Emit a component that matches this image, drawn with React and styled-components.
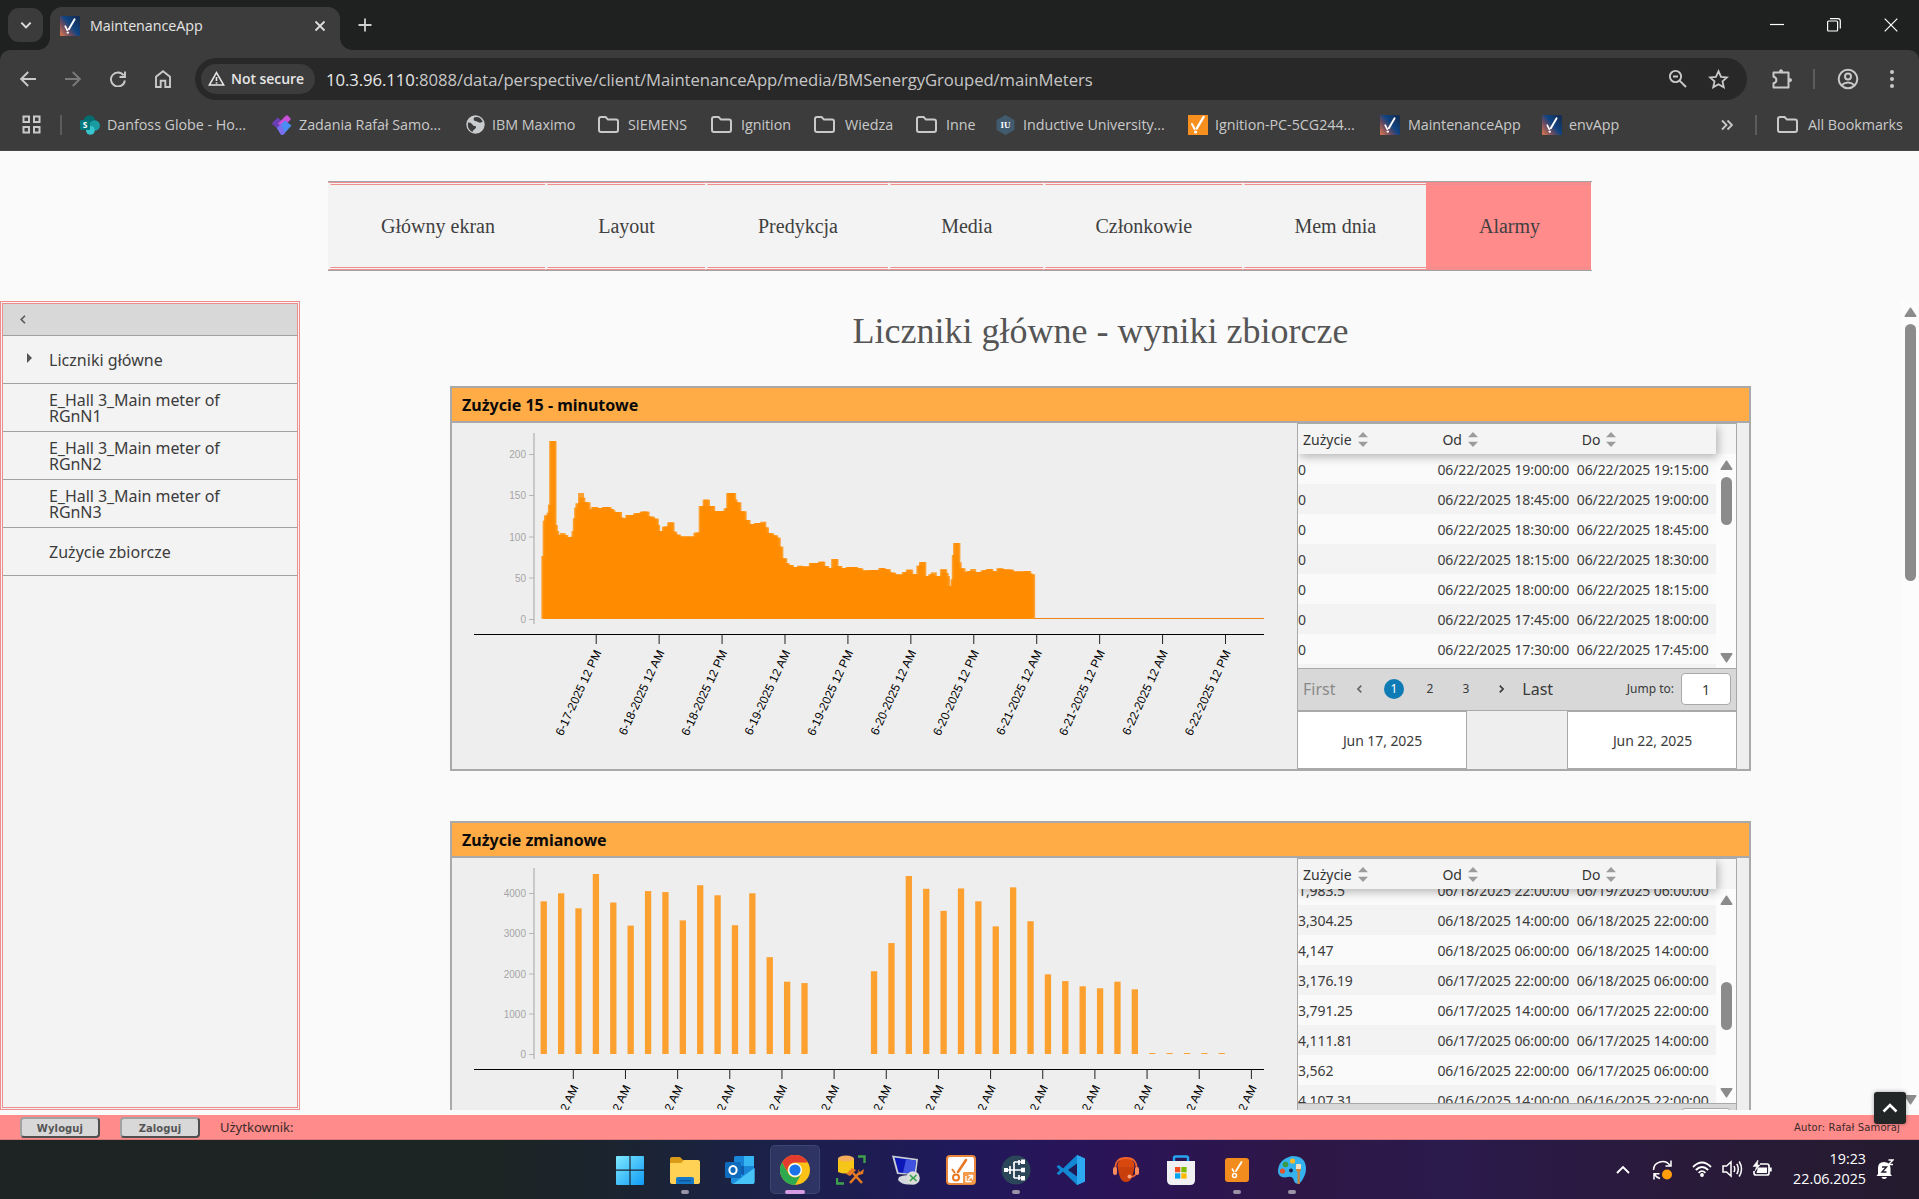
import React from "react";
import styled, { createGlobalStyle } from "styled-components";

const GlobalStyle = createGlobalStyle`
  * { box-sizing: border-box; }
  html, body { margin: 0; padding: 0; overflow: hidden; background: #fafafa; }
  body { font-family: "Noto Sans", "Open Sans", sans-serif; }
  svg { display: block; flex: none; }
`;

const uiFont = `"Open Sans", "Noto Sans", sans-serif`;
const serif = `"Liberation Serif", "Times New Roman", serif`;

const Screen = styled.div`
  width: 1919px;
  height: 1199px;
  display: flex;
  flex-direction: column;
  overflow: hidden;
`;

/* ---------- browser chrome ---------- */

const TabStrip = styled.div`
  height: 50px;
  flex: none;
  display: flex;
  background: #1f2120;
  font-family: ${uiFont};
  padding-left: 8px;
`;

const TabSearch = styled.div`
  width: 35px;
  height: 34px;
  margin-top: 8px;
  border-radius: 11px;
  background: #3b3b3b;
  display: grid;
  place-items: center;
`;

const Tab = styled.div`
  position: relative;
  width: 290px;
  height: 43px;
  margin: 7px 0 0 7px;
  padding: 0 14px 0 10px;
  border-radius: 12px 12px 0 0;
  background: #3c3c3c;
  display: flex;
  align-items: center;
  padding-bottom: 6px;
  &::before, &::after {
    content: "";
    position: absolute;
    bottom: 0;
    width: 12px;
    height: 12px;
  }
  &::before {
    left: -12px;
    background: radial-gradient(circle at 0 0, transparent 11.5px, #3c3c3c 12px);
  }
  &::after {
    right: -12px;
    background: radial-gradient(circle at 100% 0, transparent 11.5px, #3c3c3c 12px);
  }
`;

const TabTitle = styled.span`
  flex: 1;
  margin-left: 10px;
  font-size: 14.3px;
  letter-spacing: -0.03px;
  color: #e4e4e4;
`;

const NewTab = styled.div`
  margin: 18px 0 0 18px;
`;

const WindowControls = styled.div`
  margin-left: auto;
  display: flex;
  align-items: center;
  gap: 43px;
  height: 49px;
  padding-right: 21px;
`;

const Toolbar = styled.div`
  height: 58px;
  flex: none;
  display: flex;
  align-items: center;
  background: #3c3c3c;
  font-family: ${uiFont};
  padding-left: 5px;
  border-radius: 10px 10px 0 0;
`;

const ToolbarBack = styled.div`
  background: #1f2120;
  flex: none;
`;

const ToolButton = styled.div`
  width: ${(p) => p.$w || 45}px;
  margin-left: ${(p) => p.$ml || 0}px;
  display: flex;
  justify-content: center;
  color: ${(p) => (p.$dim ? "#7a7a7a" : "#c9c9c9")};
`;

const Omnibox = styled.div`
  width: 1552px;
  height: 42px;
  margin-left: 10px;
  border-radius: 21px;
  background: #282828;
  display: flex;
  align-items: center;
  padding: 0 18px 0 6px;
  color: #c9c9c9;
`;

const SecurityChip = styled.div`
  width: 114px;
  height: 30px;
  border-radius: 15px;
  background: #3c3c3c;
  display: flex;
  align-items: center;
  gap: 6px;
  padding: 0 0 1px 7px;
  font-size: 14px;
  font-weight: 600;
  letter-spacing: -0.05px;
  color: #e6e6e6;
  white-space: nowrap;
`;

const Url = styled.div`
  flex: 1;
  margin-left: 11px;
  font-size: 16.7px;
  letter-spacing: -0.07px;
  color: #c6c6c6;
  white-space: nowrap;
  b { font-weight: 400; color: #e8e8e8; }
`;

const OmniActions = styled.div`
  display: flex;
  align-items: center;
  gap: 20px;
`;

const Separator = styled.div`
  width: 2px;
  height: 20px;
  flex: none;
  margin: 0 ${(p) => p.$mr}px 0 ${(p) => p.$ml}px;
  background: #5c5c5c;
`;

const Bookmarks = styled.div`
  height: 43px;
  flex: none;
  display: flex;
  align-items: center;
  background: #3c3c3c;
  border-bottom: 1px solid #4a4545;
  font-family: ${uiFont};
  padding: 0 0 9px 22px;
`;

const Bookmark = styled.div`
  display: flex;
  align-items: center;
  width: ${(p) => p.$w}px;
  gap: ${(p) => p.$gap || 7}px;
  font-size: 14.3px;
  letter-spacing: -0.03px;
  color: #c9c9c9;
  white-space: nowrap;
`;

const BookmarkEnd = styled.div`
  margin-left: auto;
  display: flex;
  align-items: center;
  color: #c9c9c9;
`;

/* ---------- page ---------- */

const NavArea = styled.div`
  height: 150px;
  flex: none;
  background: #fafafa;
  padding: 30px 0 0 328px;
`;

const Nav = styled.nav`
  width: 1264px;
  height: 90px;
  display: flex;
  border-top: 1px solid #a3a3a3;
  border-bottom: 1px solid #a3a3a3;
`;

const NavItem = styled.div`
  width: ${(p) => p.$w}px;
  display: flex;
  align-items: center;
  justify-content: center;
  border: 3px double transparent;
  border-right: none;
  border-top-color: #ee8d8d;
  border-bottom-color: #ee8d8d;
  background: ${(p) => (p.$active ? "#ff8b8b" : "#f3f3f3")};
  padding-top: 1px;
  font-family: ${serif};
  font-size: 20px;
  color: #404040;
`;

const Main = styled.div`
  height: 809px;
  flex: none;
  display: flex;
  background: #fafafa;
  overflow: hidden;
`;

const Sidebar = styled.aside`
  width: 300px;
  height: 809px;
  border: 3px double #ee8d8d;
  background: #f3f3f3;
`;

const SideHeader = styled.div`
  height: 32px;
  background: #d8d8d8;
  border-bottom: 1px solid #a0a0a0;
  display: flex;
  align-items: center;
  padding-left: 17px;
`;

const SideItem = styled.div`
  height: 48px;
  border-bottom: 1px solid #a0a0a0;
  display: flex;
  align-items: center;
  font-size: 16px;
  line-height: 16px;
  color: #3c3c3c;
`;

const Caret = styled.div`
  width: 46px;
  padding: 0 0 4px 24px;
`;

const SideText = styled.div`
  width: 190px;
  letter-spacing: ${(p) => (p.$long ? -0.05 : 0.03)}px;
`;

const Content = styled.main`
  width: 1601px;
  display: flex;
  flex-direction: column;
  align-items: center;
  overflow: hidden;
`;

const PageTitle = styled.h1`
  margin: 0;
  height: 85px;
  flex: none;
  font: 400 36px/61px ${serif};
  color: #555;
`;

const Card = styled.section`
  width: 1301px;
  height: 385px;
  flex: none;
  margin-bottom: 50px;
  border: 2px solid #a9a9a9;
  background: #eee;
`;

const CardHeader = styled.div`
  height: 35px;
  border-bottom: 2px solid #a9a9a9;
  background: #ffac47;
  padding: 1px 0 0 10px;
  font-size: 16px;
  line-height: 33px;
  font-weight: 700;
  color: #0a0a0a;
`;

const CardBody = styled.div`
  height: 346px;
  display: flex;
`;

const TableColumn = styled.div`
  width: 440px;
  height: 346px;
  display: flex;
  flex-direction: column;
`;

const Table = styled.div`
  height: 245px;
  flex: none;
  border: 1px solid #a9a9a9;
  border-bottom: none;
  background: #fafafa;
  display: flex;
  flex-direction: column;
`;

const TableHead = styled.div`
  position: relative;
  z-index: 1;
  height: 30px;
  flex: none;
  background: #f5f5f5;
`;

const HeadCells = styled.div`
  width: 418px;
  height: 30px;
  display: grid;
  grid-template-columns: repeat(3, 139.4px);
  background: #f4f4f4;
  box-shadow: 2px 3px 10px rgba(0, 0, 0, 0.28);
  clip-path: inset(0 -20px -20px 0);
`;

const HeadCell = styled.div`
  display: flex;
  align-items: center;
  gap: 6px;
  padding-left: 5px;
  font-size: 14px;
  color: #333;
`;

const TableBody = styled.div`
  height: 214px;
  flex: none;
  display: flex;
  overflow: hidden;
`;

const Rows = styled.div`
  width: 418px;
  flex: none;
  margin-top: ${(p) => p.$shift}px;
`;

const Row = styled.div`
  height: 30px;
  display: grid;
  grid-template-columns: repeat(3, 139.4px);
  align-items: center;
  background: ${(p) => (p.$alt ? "#f3f3f3" : "#fafafa")};
  font-size: 14px;
  line-height: 30px;
  letter-spacing: -0.1px;
  color: #3c3c3c;
  white-space: nowrap;
  span { padding-top: 1px; }
`;

const ScrollTrack = styled.div`
  width: ${(p) => p.$w}px;
  flex: 1;
  display: flex;
  flex-direction: column;
  align-items: center;
  background: ${(p) => p.$bg};
`;

const Thumb = styled.div`
  width: ${(p) => p.$w}px;
  height: ${(p) => p.$h}px;
  margin: ${(p) => p.$mt}px 0 auto;
  border-radius: 6px;
  background: #8b8b8b;
  flex: none;
`;

const Arrow = styled.div`
  margin: ${(p) => (p.$down ? "0 0 5px" : "6px 0 0")};
  transform: ${(p) => (p.$down ? "rotate(180deg)" : "none")};
`;

const Pager = styled.div`
  height: 43px;
  flex: none;
  border: 1px solid #a9a9a9;
  background: #d8d8d8;
  display: flex;
  align-items: center;
  padding: 0 5px 2px 5px;
  font-size: 16px;
  color: #3a3a3a;
  white-space: nowrap;
`;

const PagerCell = styled.div`
  width: ${(p) => p.$w}px;
  display: flex;
  justify-content: ${(p) => (p.$start ? "flex-start" : "center")};
  color: ${(p) => (p.$dim ? "#8a8a8a" : "#3a3a3a")};
  font-size: ${(p) => (p.$start ? 16 : 12)}px;
`;

const CurrentPage = styled.div`
  width: 20px;
  height: 20px;
  border-radius: 50%;
  background: #0f7bb5;
  color: #fff;
  font-size: 12px;
  line-height: 20px;
  text-align: center;
`;

const JumpLabel = styled.span`
  margin-left: auto;
  font-size: 12px;
`;

const JumpInput = styled.div`
  width: 50px;
  height: 32px;
  margin-left: 7px;
  border: 1px solid #a9a9a9;
  border-radius: 4px;
  background: #fff;
  font-size: 14px;
  line-height: 31px;
  text-align: center;
`;

const DateRow = styled.div`
  height: 58px;
  display: flex;
  justify-content: space-between;
`;

const DateInput = styled.div`
  width: 170px;
  height: 58px;
  border: 1px solid #a9a9a9;
  background: #fff;
  display: grid;
  place-items: center;
  font-size: 14px;
  letter-spacing: -0.08px;
  color: #3c3c3c;
  padding: 1px 0 0 1px;
`;

const Footer = styled.footer`
  position: relative;
  height: 25px;
  flex: none;
  margin-top: 5px;
  background: #ff8b8b;
  display: flex;
  align-items: center;
  padding: 0 19px 0 20px;
  border-bottom: 1px solid #d97b7b;
`;

const FooterButton = styled.div`
  width: 80px;
  height: 21px;
  margin-right: 20px;
  border: 2px solid;
  border-color: #a2a2a2 #4f4f4f #4f4f4f #a2a2a2;
  border-radius: 4px;
  background: #d8d8d8;
  font: 700 10px/19px "DejaVu Sans", Verdana, sans-serif;
  letter-spacing: 0.1px;
  text-align: center;
  color: #555;
`;

const UserLabel = styled.span`
  font-size: 13px;
  color: #3c2a2a;
`;

const Author = styled.span`
  margin-left: auto;
  padding-top: 2px;
  font: 400 10px/20px "DejaVu Sans", Verdana, sans-serif;
  letter-spacing: 0.12px;
  color: #3c2a2a;
`;

const ScrollTop = styled.div`
  position: absolute;
  right: 13px;
  top: -23px;
  width: 32px;
  height: 32px;
  border-radius: 3px;
  background: #222627;
  box-shadow: 0 0 4px rgba(0, 0, 0, 0.35);
  display: grid;
  place-items: center;
`;

/* ---------- taskbar ---------- */

const Taskbar = styled.div`
  position: relative;
  height: 59px;
  flex: none;
  display: flex;
  align-items: flex-start;
  padding-top: 5px;
  background: linear-gradient(90deg, #1e2423 0, #1c2424 500px, #1b2430 620px, #1b2148 760px, #20195a 950px, #2a1458 1100px, #2e1747 1300px, #2b1a4c 1450px, #2a1a3c 1650px, #241b2e 100%);
  padding-left: 605px;
`;

const TaskApp = styled.div`
  width: 50px;
  height: 49px;
  margin-right: 5.15px;
  flex: none;
  border-radius: 5px;
  background: ${(p) => (p.$active ? "rgba(120,140,190,0.2)" : "transparent")};
  box-shadow: ${(p) => (p.$active ? "inset 0 0 0 1px rgba(150,160,200,0.15)" : "none")};
  display: flex;
  flex-direction: column;
  align-items: center;
  padding-top: 10px;
  gap: 5px;
`;

const RunMark = styled.div`
  width: ${(p) => (p.$active ? 20 : 8)}px;
  height: 4px;
  border-radius: 2px;
  background: ${(p) => (p.$active ? "#d79be3" : "#9a93a6")};
`;

const Tray = styled.div`
  margin: 4px 0 0 auto;
  width: 303px;
  display: flex;
  align-items: center;
  height: 40px;
`;

const TrayIcon = styled.div`
  width: ${(p) => p.$w}px;
  flex: none;
`;

const Clock = styled.div`
  width: 78px;
  margin-left: 16px;
  margin-right: 10px;
  font: 400 14.3px/20px ${uiFont};
  color: #fff;
  text-align: right;
`;

/* ---------- icons ---------- */

const Stroke = ({ w = 20, h, d, sw = 2, box = "0 0 24 24", children, ...rest }) => (
  <svg width={w} height={h || w} viewBox={box} fill="none" stroke="currentColor" strokeWidth={sw} {...rest}>
    {d && <path d={d} />}
    {children}
  </svg>
);

const ScrollArrow = ({ down }) => (
  <Arrow $down={down}>
    <svg width="13" height="10" viewBox="0 0 13 10">
      <path d="M6.500 1.200L11.800 9.200H1.200Z" fill="#8b8b8b" stroke="#8b8b8b" strokeWidth="1.400" strokeLinejoin="round" />
    </svg>
  </Arrow>
);

const AppIcon = ({ size = 20 }) => (
  <svg width={size} height={size} viewBox="0 0 20 20">
    <defs>
      <linearGradient id="appbg" x1="0" y1="1" x2="1" y2="0.2">
        <stop offset="0" stopColor="#e07a50" />
        <stop offset="0.35" stopColor="#6b4b60" />
        <stop offset="0.6" stopColor="#0f4482" />
        <stop offset="1" stopColor="#152d52" />
      </linearGradient>
    </defs>
    <rect width="20" height="20" rx="1" fill="url(#appbg)" />
    <path d="M5.2 10.2l2 4" stroke="#fff" strokeWidth="1.700" strokeLinecap="round" />
    <path d="M14.6 3.2L8.8 13.2" stroke="#fff" strokeWidth="1.900" strokeLinecap="round" />
    <circle cx="7.8" cy="16.6" r="1.2" fill="#fff" />
  </svg>
);

const IgnitionIcon = () => (
  <svg width="20" height="20" viewBox="0 0 20 20">
    <rect width="20" height="20" fill="#f7901e" />
    <path d="M4 9l2.6 5" stroke="#fff" strokeWidth="2" strokeLinecap="round" />
    <path d="M15.6 2L8.8 13.4" stroke="#fff" strokeWidth="2.4" strokeLinecap="round" />
    <circle cx="7.6" cy="17" r="1.6" fill="#fff" />
  </svg>
);

const FolderIcon = () => (
  <svg width="21" height="17" viewBox="0 0 21 17" fill="none" stroke="#c9c9c9" strokeWidth="2">
    <path d="M1 3Q1 1 3 1H7.6L10 3.6H18Q20 3.6 20 5.6V14Q20 16 18 16H3Q1 16 1 14Z" />
  </svg>
);

const SharePointIcon = () => (
  <svg width="20" height="20" viewBox="0 0 20 20">
    <circle cx="9.5" cy="6" r="5.8" fill="#036c70" />
    <circle cx="14.6" cy="10.5" r="5.3" fill="#1a9ba1" />
    <circle cx="10.4" cy="15.4" r="4.4" fill="#37c6d0" />
    <rect y="5" width="10" height="10" rx="1" fill="#03787c" />
    <text x="5" y="13" fontSize="8.5" fontWeight="700" fill="#fff" textAnchor="middle" fontFamily="Open Sans, sans-serif">S</text>
  </svg>
);

const PowerIcon = () => (
  <svg width="20" height="20" viewBox="0 0 20 20">
    <path d="M1 7L6 2.5 12 9 6 14 0 9Z" fill="#6a3fb5" />
    <path d="M8.5 6L14 0.5Q15 -0.2 16 0.8L19 4 11 13 6 8.5Z" fill="#c94fd8" />
    <path d="M5 13L13 5.5 19.5 10.5 11.5 19.5Q10 20.5 8.6 19Z" fill="#4b8df2" />
    <path d="M5 13L9 9.3 13 18 11.5 19.5Q10 20.5 8.6 19Z" fill="#7b6cf0" />
  </svg>
);

const GlobeIcon = () => (
  <svg width="19" height="19" viewBox="0 0 19 19">
    <circle cx="9.5" cy="9.5" r="9.2" fill="#c9cccf" />
    <path d="M2 7.5Q5 7 6.2 9.2T9.6 11Q10.8 13 8.6 14.2T6.6 17Q2.6 15.2 1.8 11Z" fill="#3c3c3c" />
    <path d="M8.6 2.2Q12 1.6 14.6 3.4L16.8 6.6Q14.6 8.4 12.4 7.2T9 6Q6.4 4.4 8.6 2.2Z" fill="#3c3c3c" />
  </svg>
);

const IUIcon = () => (
  <svg width="19" height="20" viewBox="0 0 19 20">
    <path d="M9.5 0L18.5 5V15L9.5 20 0.5 15V5Z" fill="#415a6e" />
    <text x="9.5" y="13.4" fontSize="9" fontWeight="700" fill="#fff" textAnchor="middle" fontFamily="Liberation Serif, serif">IU</text>
  </svg>
);

const SortIcon = () => (
  <svg width="10" height="15" viewBox="0 0 10 15" fill="#9c9c9c">
    <path d="M5 0L10 5.2H0ZM5 15L10 9.8H0Z" />
  </svg>
);

/* ---------- data ---------- */

const navItems = [
  ["Główny ekran", 217], ["Layout", 160], ["Predykcja", 183], ["Media", 154.5],
  ["Członkowie", 199.5], ["Mem dnia", 183.500], ["Alarmy", 165, true],
];

const bookmarks = [
  [<SharePointIcon />, "Danfoss Globe - Ho...", 192],
  [<PowerIcon />, "Zadania Rafał Samo...", 194],
  [<GlobeIcon />, "IBM Maximo", 132],
  [<FolderIcon />, "SIEMENS", 113, 9],
  [<FolderIcon />, "Ignition", 103, 9],
  [<FolderIcon />, "Wiedza", 102, 10],
  [<FolderIcon />, "Inne", 80, 9],
  [<IUIcon />, "Inductive University...", 192, 8],
  [<IgnitionIcon />, "Ignition-PC-5CG244...", 192],
  [<AppIcon />, "MaintenanceApp", 162, 8],
  [<AppIcon />, "envApp", 110, 7],
];

const rows15 = [
  ["0", "06/22/2025 19:00:00", "06/22/2025 19:15:00"],
  ["0", "06/22/2025 18:45:00", "06/22/2025 19:00:00"],
  ["0", "06/22/2025 18:30:00", "06/22/2025 18:45:00"],
  ["0", "06/22/2025 18:15:00", "06/22/2025 18:30:00"],
  ["0", "06/22/2025 18:00:00", "06/22/2025 18:15:00"],
  ["0", "06/22/2025 17:45:00", "06/22/2025 18:00:00"],
  ["0", "06/22/2025 17:30:00", "06/22/2025 17:45:00"],
];

const rowsShift = [
  ["1,983.5", "06/18/2025 22:00:00", "06/19/2025 06:00:00"],
  ["3,304.25", "06/18/2025 14:00:00", "06/18/2025 22:00:00"],
  ["4,147", "06/18/2025 06:00:00", "06/18/2025 14:00:00"],
  ["3,176.19", "06/17/2025 22:00:00", "06/18/2025 06:00:00"],
  ["3,791.25", "06/17/2025 14:00:00", "06/17/2025 22:00:00"],
  ["4,111.81", "06/17/2025 06:00:00", "06/17/2025 14:00:00"],
  ["3,562", "06/16/2025 22:00:00", "06/17/2025 06:00:00"],
  ["4,107.31", "06/16/2025 14:00:00", "06/16/2025 22:00:00"],
];

// Load profile as [position, level] steps; a level holds until the next position.
const profile = [
  [304, 558], [308, 452], [314, 436], [320, 428], [324, 404], [328, 256], [330, 213], [348, 465], [352, 483],
  [356, 495], [360, 489], [376, 495], [383, 502], [390, 500], [394, 483], [397, 445], [402, 413], [407, 400],
  [413, 369], [432, 383], [434, 397], [451, 418], [454, 411], [475, 415], [485, 411], [513, 417], [522, 421],
  [527, 426], [546, 443], [553, 446], [556, 435], [578, 430], [600, 425], [627, 440], [643, 446], [655, 465],
  [660, 483], [666, 470], [684, 457], [704, 485], [712, 494], [722, 500], [759, 488], [776, 408], [790, 389],
  [809, 408], [825, 423], [850, 415], [858, 369], [887, 388], [890, 397], [903, 424], [919, 450], [933, 462],
  [943, 459], [960, 455], [978, 472], [985, 490], [1004, 496], [1012, 503], [1022, 530], [1028, 545],
  [1031, 565], [1040, 580], [1048, 585], [1063, 591], [1070, 587], [1090, 590], [1109, 579], [1135, 575],
  [1155, 588], [1166, 595], [1173, 567], [1194, 588], [1205, 595], [1219, 591], [1252, 595],
  [1269, 602], [1285, 600], [1316, 594], [1335, 598], [1351, 608], [1368, 614], [1387, 606], [1400, 599],
  [1419, 613], [1430, 587], [1439, 576], [1458, 618], [1467, 613], [1471, 607], [1489, 619], [1500, 615],
  [1502, 598], [1521, 609], [1524, 618], [1528, 648], [1531, 628], [1534, 598], [1537, 555], [1541, 519],
  [1560, 577], [1563, 595], [1576, 607], [1579, 603], [1589, 597], [1608, 606], [1624, 601], [1638, 597],
  [1658, 603], [1670, 607], [1671, 595], [1690, 598], [1700, 599], [1722, 605], [1753, 603], [1772, 610],
  [1776, 613], [1784, 748],
];

const levelAt = (x) => {
  let y = 748;
  for (const [px, py] of profile) {
    if (px > x) break;
    y = py;
  }
  return y;
};

const quarterBars = [];
for (let x = 313; x <= 1777; x += 3.934) {
  let y = 0;
  for (let k = -6.5; k <= 6.5; k += 1) y = Math.max(y, levelAt(x + k));
  quarterBars.push({ x: x / 3 - 12 - 3, y: y / 3 - 53 });
}

const quarterTicks = ["6-17-2025 12 PM", "6-18-2025 12 AM", "6-18-2025 12 PM", "6-19-2025 12 AM", "6-19-2025 12 PM",
  "6-20-2025 12 AM", "6-20-2025 12 PM", "6-21-2025 12 AM", "6-21-2025 12 PM", "6-22-2025 12 AM", "6-22-2025 12 PM"];

// Consumption per shift; null means no reading.
const shiftValues = [3800, 4000, 3625, 4480, 3770, 3195, 4055, 4030, 3325, 4200, 3950, 3205, 4000, 2410, 1800, 1765,
  null, null, null, 2060, 2760, 4430, 4112, 3562, 4120, 3800, 3176, 4147, 3304, 1983, 1815, 1685, 1635, 1800, 1610,
  24, 24, 24, 24, 24];

const axisFont = { fontFamily: "Liberation Sans, Arial, sans-serif" };

const ValueAxis = ({ ticks }) => (
  <g>
    <rect x="81" y="10" width="2" height="191" fill="#c9c9c9" />
    {ticks.map(([label, y]) => (
      <g key={label}>
        <rect x="77" y={y - 0.5} width="5" height="1" fill="#b5b5b5" />
        <text x="74" y={y + 3.6} fontSize="10" textAnchor="end" fill="#a5a5a5" {...axisFont}>{label}</text>
      </g>
    ))}
  </g>
);

const TimeAxis = ({ labels, start, step }) => (
  <g>
    <rect x="22" y="211" width="790" height="1" fill="#000" />
    {labels.map((label, i) => {
      const x = start + i * step;
      return (
        <g key={i}>
          <rect x={x - 0.5} y="212" width="1" height="9" fill="#222" />
          <text transform={`translate(${x + 5.5} 229.5) rotate(-65)`} fontSize="12" textAnchor="end" fill="#000" {...axisFont}>{label}</text>
        </g>
      );
    })}
  </g>
);

const QuarterChart = () => (
  <svg width="845" height="346" viewBox="0 0 845 346">
    {quarterBars.map((b, i) => (
      <rect key={i} x={b.x} y={b.y} width="6" height={195.8 - b.y} fill="#ff8c00" opacity="0.8" />
    ))}
    <rect x="582" y="195" width="230" height="1" fill="#f0821a" />
    <ValueAxis ticks={[["200", 31.5], ["150", 72.5], ["100", 114], ["50", 155], ["0", 196.5]]} />
    <TimeAxis labels={quarterTicks} start={144.2} step={62.93} />
  </svg>
);

const ShiftChart = () => (
  <svg width="845" height="346" viewBox="0 0 845 346">
    {shiftValues.map((v, i) => v && (
      <rect key={i} x={88.6 + i * 17.385} y={196 - v * 0.04018} width="6.3" height={v * 0.04018} fill="#ff8c00" opacity="0.8" />
    ))}
    <ValueAxis ticks={[["4000", 35.5], ["3000", 75.5], ["2000", 116], ["1000", 156], ["0", 196.5]]} />
    <TimeAxis labels={Array(14).fill("12 AM")} start={121.3} step={52.16} />
  </svg>
);

const MeterCard = ({ title, chart, rows, shift, thumb }) => (
  <Card>
    <CardHeader>{title}</CardHeader>
    <CardBody>
      {chart}
      <TableColumn>
        <Table>
          <TableHead>
            <HeadCells>
              {["Zużycie", "Od", "Do"].map((h) => <HeadCell key={h}>{h}<SortIcon /></HeadCell>)}
            </HeadCells>
          </TableHead>
          <TableBody>
            <Rows $shift={shift}>
              {rows.map((r, i) => (
                <Row key={i} $alt={i % 2 === 1}>{r.map((c, j) => <span key={j}>{c}</span>)}</Row>
              ))}
              {shift === 0 && <Row $alt />}
            </Rows>
            <ScrollTrack $w={20} $bg="#fcfcfc">
              <ScrollArrow />
              <Thumb $w={11} $h={48} $mt={thumb} />
              <ScrollArrow down />
            </ScrollTrack>
          </TableBody>
        </Table>
        <Pager>
          <PagerCell $w={44} $start $dim>First</PagerCell>
          <PagerCell $w={26}><Stroke w={10} d="M15 4l-8 8 8 8" sw={4} color="#666" /></PagerCell>
          <PagerCell $w={42}><CurrentPage>1</CurrentPage></PagerCell>
          <PagerCell $w={30}>2</PagerCell>
          <PagerCell $w={42}>3</PagerCell>
          <PagerCell $w={27}><Stroke w={10} d="M9 4l8 8-8 8" sw={4} /></PagerCell>
          <PagerCell $w={50} $start>&nbsp;&nbsp;Last</PagerCell>
          <JumpLabel>Jump to:</JumpLabel>
          <JumpInput>1</JumpInput>
        </Pager>
        <DateRow>
          <DateInput>Jun 17, 2025</DateInput>
          <DateInput>Jun 22, 2025</DateInput>
        </DateRow>
      </TableColumn>
    </CardBody>
  </Card>
);

/* ---------- taskbar icons (30 x 30) ---------- */

const Pic = ({ children }) => <svg width="30" height="30" viewBox="0 0 30 30">{children}</svg>;

const taskApps = [
  {
    icon: (
      <Pic>
        <defs><linearGradient id="win" x1="0" y1="0" x2="1" y2="1"><stop offset="0" stopColor="#7fe9ff" /><stop offset="1" stopColor="#0f9bf5" /></linearGradient></defs>
        <path d="M1 2Q1 1 2 1H14.4V14.6H1ZM15.6 1H28Q29 1 29 2V14.6H15.6ZM1 15.8H14.4V30H2Q1 30 1 29ZM15.6 15.8H29V29Q29 30 28 30H15.6Z" fill="url(#win)" />
      </Pic>
    ),
  },
  {
    run: true,
    icon: (
      <Pic>
        <path d="M0 4Q0 2 2 2H10L13 5H20V12H0Z" fill="#d99a17" />
        <path d="M0 8H11L14 5H28Q30 5 30 7V27Q30 29 28 29H2Q0 29 0 27Z" fill="#ffd255" />
        <path d="M6 29V24Q6 22 8 22H22Q24 22 24 24V29Z" fill="#1478c8" />
        <rect x="9" y="25" width="12" height="1.6" rx=".8" fill="#0c559a" />
      </Pic>
    ),
  },
  {
    icon: (
      <Pic>
        <rect x="9" y="1" width="20" height="20" rx="1.5" fill="#1a86d8" />
        <path d="M19 1H29V11H19Z" fill="#35b5f2" /><path d="M9 11H19V21H9Z" fill="#0f5fb0" />
        <path d="M6 13L18 20 29.5 13V27Q29.5 29 27.5 29H8Q6 29 6 27Z" fill="#1e8fe0" />
        <path d="M29.5 13L8 29H27.5Q29.5 29 29.5 27Z" fill="#47c3f7" />
        <rect x="0" y="7" width="16" height="16" rx="1.6" fill="#0f6cbd" />
        <ellipse cx="8" cy="15" rx="3.6" ry="4" fill="none" stroke="#fff" strokeWidth="2" />
      </Pic>
    ),
  },
  {
    run: true,
    active: true,
    icon: (
      <Pic>
        <circle cx="15" cy="15" r="15" fill="#fbc116" />
        <path d="M2 7.5A15 15 0 0 1 28 7.5H15A7.5 7.5 0 0 0 8.5 18.75Z" fill="#e33b2e" />
        <path d="M2 7.5A15 15 0 0 0 15 30L21.5 18.75A7.5 7.5 0 0 1 8.5 18.75Z" fill="#2da94f" />
        <circle cx="15" cy="15" r="7" fill="#fff" /><circle cx="15" cy="15" r="5.6" fill="#1a73e8" />
      </Pic>
    ),
  },
  {
    icon: (
      <Pic>
        <path d="M2 3.500V17Q9 20 18 17V3.500Z" fill="#f5c518" /><ellipse cx="10" cy="3.500" rx="8" ry="3" fill="#f6ae5c" />
        <path d="M22 1.500H28.500V8M1 23V28.500H8" stroke="#3fa14b" strokeWidth="2.400" fill="none" />
        <path d="M14 28L23 18M26 28L17 18" stroke="#e77b22" strokeWidth="2.600" /><path d="M10 19L16 13 20 15 14 21ZM22 14L24 17 28 14 27 19 23 20Z" fill="#e77b22" />
      </Pic>
    ),
  },
  {
    icon: (
      <Pic>
        <path d="M1 0.500L27 4 25 20 6 19Z" fill="#c9ced6" /><path d="M3.500 2.500L25 5.500 23.500 19 7.500 17.500Z" fill="#0d17b8" />
        <path d="M15 4.200L25 5.500 23.500 19 12 17.800Z" fill="#3f52e0" /><path d="M8 22Q14 19 20 21L22 29Q12 31 7 25Z" fill="#d4d8dd" />
        <circle cx="22" cy="23" r="6.800" fill="#d9dcd9" /><path d="M19 20l3 3-3 3M25.500 20l-3 3 3 3" stroke="#34a04a" strokeWidth="1.500" fill="none" />
      </Pic>
    ),
  },
  {
    icon: (
      <Pic>
        <rect x="1" y="1" width="28" height="28" rx="3" fill="#fff" stroke="#e8873c" strokeWidth="2" />
        <path d="M20 5L12 17" stroke="#e87722" strokeWidth="2.600" strokeLinecap="round" /><path d="M6 14l3 4" stroke="#e87722" strokeWidth="2" />
        <circle cx="10" cy="22.500" r="3" fill="none" stroke="#e87722" strokeWidth="2" />
        <rect x="17" y="17" width="12" height="12" rx="1" fill="#f39a4a" /><path d="M20 21v5.500h5.500M22.500 20.500h4v4M26 21l-4 4" stroke="#fff" strokeWidth="1.300" fill="none" />
      </Pic>
    ),
  },
  {
    run: true,
    icon: (
      <Pic>
        <circle cx="15" cy="15" r="14.500" fill="#2b4658" />
        <path d="M5 15H13M13 7V23M13 7H21M13 15H21M13 23H21M9 11V19M18 5V10M18 20V25" stroke="#fff" strokeWidth="1.700" fill="none" />
        <path d="M3 13h4v4H3ZM20 4.500h4v4.500h-4ZM20 12.800h4v4.400h-4ZM20 21h4v4.500h-4Z" fill="#fff" />
      </Pic>
    ),
  },
  {
    icon: (
      <Pic>
        <path d="M21 0L29 3.500V26.500L21 30 7 16.500 3 20 0.500 18.500 4 15 0.500 11.500 3 10 7 13.500Z" fill="#1287d4" />
        <path d="M21 0L29 3.500V26.500L21 30Z" fill="#2ea8f0" /><path d="M21 8.500V21.500L12 15Z" fill="#1d1a55" />
      </Pic>
    ),
  },
  {
    icon: (
      <Pic>
        <circle cx="15" cy="11" r="8.500" fill="#d8480e" /><path d="M7 12Q8 27 15 27T23 12Z" fill="#c93f0b" />
        <path d="M4.500 15Q3.500 3 15 3T25.500 15Q26 22 19 22" stroke="#f0622c" strokeWidth="1.800" fill="none" />
        <rect x="2" y="12" width="4" height="8" rx="2" fill="#f98b5c" /><rect x="24" y="12" width="4" height="8" rx="2" fill="#f98b5c" />
        <circle cx="18.500" cy="21.500" r="2" fill="#ffa27a" />
      </Pic>
    ),
  },
  {
    icon: (
      <Pic>
        <path d="M8 7V3Q8 1.500 9.500 1.500H20.500Q22 1.500 22 3V7" stroke="#27a4f0" strokeWidth="2.400" fill="none" />
        <path d="M1 6H29V25Q29 30 24 30H6Q1 30 1 25Z" fill="#f1f1f3" />
        <rect x="9" y="12" width="5.300" height="5.300" fill="#f25022" /><rect x="15.300" y="12" width="5.300" height="5.300" fill="#7fba00" />
        <rect x="9" y="18.300" width="5.300" height="5.300" fill="#00a4ef" /><rect x="15.300" y="18.300" width="5.300" height="5.300" fill="#ffb900" />
      </Pic>
    ),
  },
  {
    run: true,
    icon: (
      <Pic>
        <rect x="3" y="3" width="24" height="24" rx="3" fill="#f28c1e" />
        <path d="M19.500 7L14 16" stroke="#fff" strokeWidth="1.800" strokeLinecap="round" /><path d="M10 13.500l2 3.500" stroke="#fff" strokeWidth="1.600" />
        <circle cx="12.500" cy="20.500" r="2" fill="none" stroke="#fff" strokeWidth="1.400" />
      </Pic>
    ),
  },
  {
    run: true,
    icon: (
      <Pic>
        <path d="M15 1Q29 1 29 14 29 20 24 27 19 31 17 26 16 21 11 22 2 24 1 17 1 4 15 1Z" fill="#35b2ee" />
        <circle cx="15.500" cy="6" r="2.600" fill="#f7b928" /><circle cx="8.500" cy="9.500" r="2.800" fill="#3a9b43" /><circle cx="5.500" cy="16" r="2.600" fill="#e0532f" />
        <circle cx="14" cy="15.500" r="2" fill="#1b2148" />
        <path d="M19 9H24V15L22.800 17V29H20.500V17L19 15Z" fill="#c9853f" /><path d="M19 9H24V14H19Z" fill="#f0dfc4" />
      </Pic>
    ),
  },
];

export default function App() {
  return (
    <Screen>
      <GlobalStyle />
      <TabStrip>
        <TabSearch><Stroke w={14} d="M4 8l8 8 8-8" sw={3.4} color="#dedede" /></TabSearch>
        <Tab>
          <AppIcon />
          <TabTitle>MaintenanceApp</TabTitle>
          <Stroke w={12} box="0 0 12 12" d="M1.500 1.500l9 9M10.500 1.500l-9 9" sw={1.800} color="#dedede" />
        </Tab>
        <NewTab><Stroke w={14} box="0 0 14 14" d="M7 0.500v13M0.500 7h13" sw={1.800} color="#d0d0d0" /></NewTab>
        <WindowControls>
          <Stroke w={14} box="0 0 14 14" d="M0 6.500h14" sw={1.200} color="#fff" />
          <Stroke w={14} box="0 0 14 14" sw={1.200} color="#fff">
            <rect x="0.600" y="3" width="10" height="10" rx="1" />
            <path d="M3 0.700H11Q13.300 0.700 13.300 3V10.500" />
          </Stroke>
          <Stroke w={14} box="0 0 14 14" d="M0.700 0.700l12.600 12.600M13.300 0.700L0.700 13.300" sw={1.200} color="#fff" />
        </WindowControls>
      </TabStrip>
      <ToolbarBack>
        <Toolbar>
          <ToolButton><Stroke w={16} box="0 0 16 16" d="M16 8H1.500M8.200 1L1.200 8l7 7" sw={1.900} /></ToolButton>
          <ToolButton $dim><Stroke w={16} box="0 0 16 16" d="M0 8h14.500M7.800 1l7 7-7 7" sw={1.900} /></ToolButton>
          <ToolButton>
            <Stroke w={16} box="0 0 16 16" sw={1.900}><path d="M13.700 4.400A7 7 0 1 0 14.900 9.500" /><path d="M15 0.500V6H9.500" /></Stroke>
          </ToolButton>
          <ToolButton><Stroke w={16} h={18} box="0 0 16 18" d="M1 17V6.800L8 1.200l7 5.600V17H10.300V10.800H5.700V17Z" sw={1.900} /></ToolButton>
          <Omnibox>
            <SecurityChip>
              <Stroke w={17} h={16} box="0 0 17 16" sw={1.600}><path d="M8.500 1.600L15.700 14H1.300Z" /><path d="M8.500 6v4M8.500 11.200v1.600" /></Stroke>
              Not secure
            </SecurityChip>
            <Url><b>10.3.96.110</b>:8088/data/perspective/client/MaintenanceApp/media/BMSenergyGrouped/mainMeters</Url>
            <OmniActions>
              <Stroke w={20} box="0 0 20 20" sw={1.900}><circle cx="7.500" cy="7.500" r="5.600" /><path d="M11.600 11.600L18 18M5 7.500h5" /></Stroke>
              <Stroke w={21} h={20} box="0 0 21 20" d="M10.500 2.200l2.500 5.600 6 .6-4.500 4 1.300 5.900-5.300-3.100-5.300 3.100 1.300-5.900-4.500-4 6-.6z" sw={1.800} />
            </OmniActions>
          </Omnibox>
          <ToolButton $w={45} $ml={12}>
            <Stroke w={22} box="0 0 22 22" sw={2}>
              <path d="M2.500 4.500H17.500V19.500H2.500V15.200Q5.400 14.600 5.400 12T2.500 8.800Z" strokeLinejoin="round" />
              <path d="M8 4Q8 1.200 10 1.200T12 4ZM18 10Q21 10 21 12T18 14Z" fill="currentColor" stroke="none" />
            </Stroke>
          </ToolButton>
          <Separator $ml={9} $mr={10} />
          <ToolButton $w={45}>
            <Stroke w={22} box="0 0 22 22" sw={2}><circle cx="11" cy="11" r="9.300" /><circle cx="11" cy="8.600" r="3" /><path d="M4.500 17.300Q11 11.800 17.500 17.300" /></Stroke>
          </ToolButton>
          <ToolButton $w={44}>
            <svg width="4" height="18" viewBox="0 0 4 18" fill="currentColor"><circle cx="2" cy="2" r="2" /><circle cx="2" cy="9" r="2" /><circle cx="2" cy="16" r="2" /></svg>
          </ToolButton>
        </Toolbar>
      </ToolbarBack>
      <Bookmarks>
        <Stroke w={19} box="0 0 19 19" sw={2} color="#c9c9c9">
          <path d="M1.500 1.500h5.500v5.500h-5.500zM12 1.500h5.500v5.500h-5.500zM1.500 12h5.500v5.500h-5.500zM12 12h5.500v5.500h-5.500z" />
        </Stroke>
        <Separator $ml={19} $mr={18} />
        {bookmarks.map(([icon, label, w, gap]) => (
          <Bookmark key={label} $w={w} $gap={gap}>{icon}{label}</Bookmark>
        ))}
        <BookmarkEnd>
          <Stroke w={12} box="0 0 12 12" d="M1 1.500L5.500 6 1 10.500M6.500 1.500L11 6 6.500 10.500" sw={1.800} />
          <Separator $ml={22} $mr={20} />
          <Bookmark $w={142} $gap={10}><FolderIcon />All Bookmarks</Bookmark>
        </BookmarkEnd>
      </Bookmarks>

      <NavArea>
        <Nav>
          {navItems.map(([label, w, active]) => <NavItem key={label} $w={w} $active={active}>{label}</NavItem>)}
        </Nav>
      </NavArea>

      <Main>
        <Sidebar>
          <SideHeader><Stroke w={6} h={9} box="0 0 6 9" d="M5 0.800L1.200 4.500 5 8.200" sw={1.600} color="#555" /></SideHeader>
          {["Liczniki główne", "E_Hall 3_Main meter of RGnN1", "E_Hall 3_Main meter of RGnN2", "E_Hall 3_Main meter of RGnN3", "Zużycie zbiorcze"].map((t, i) => (
            <SideItem key={t}>
              <Caret>{i === 0 && <svg width="5" height="10" viewBox="0 0 5 10"><path d="M0 0L5 5 0 10Z" fill="#555" /></svg>}</Caret>
              <SideText $long={t.length > 20}>{t}</SideText>
            </SideItem>
          ))}
        </Sidebar>
        <Content>
          <PageTitle>Liczniki główne - wyniki zbiorcze</PageTitle>
          <MeterCard title="Zużycie 15 - minutowe" chart={<QuarterChart />} rows={rows15} shift={0} thumb={7} />
          <MeterCard title="Zużycie zmianowe" chart={<ShiftChart />} rows={rowsShift} shift={-14} thumb={77} />
        </Content>
        <ScrollTrack $w={18} $bg="#fcfcfc">
          <ScrollArrow />
          <Thumb $w={11} $h={257} $mt={7} />
          <ScrollArrow down />
        </ScrollTrack>
      </Main>

      <Footer>
        <FooterButton>Wyloguj</FooterButton>
        <FooterButton>Zaloguj</FooterButton>
        <UserLabel>Użytkownik:</UserLabel>
        <Author>Autor: Rafał Samoraj</Author>
        <ScrollTop><Stroke w={16} h={10} box="0 0 16 10" d="M1.500 8.500L8 2l6.500 6.500" sw={2.600} color="#fff" /></ScrollTop>
      </Footer>

      <Taskbar>
        {taskApps.map((a, i) => (
          <TaskApp key={i} $active={a.active}>{a.icon}{a.run && <RunMark $active={a.active} />}</TaskApp>
        ))}
        <Tray>
          <TrayIcon $w={36}><Stroke w={14} h={9} box="0 0 14 9" d="M1 8l6-6 6 6" sw={1.900} color="#fff" /></TrayIcon>
          <TrayIcon $w={40}>
            <Stroke w={21} box="0 0 21 21" sw={1.500} color="#fff">
              <path d="M1.500 11A9 8.500 0 0 1 18 6.500M19 1.500V7H13.500M8 19.500Q4.500 18.500 2.500 15.500M2 20.500V14.800H7.500" />
              <circle cx="15" cy="15.500" r="5" fill="#ff9d0a" stroke="none" />
            </Stroke>
          </TrayIcon>
          <TrayIcon $w={30}>
            <Stroke w={20} h={16} box="0 0 20 16" sw={1.800} color="#fff">
              <path d="M1 6Q10 -3 19 6M3.800 9Q10 3 16.200 9M6.600 11.800Q10 8.500 13.400 11.800" /><circle cx="10" cy="14" r="1" fill="#fff" />
            </Stroke>
          </TrayIcon>
          <TrayIcon $w={30}>
            <Stroke w={21} h={18} box="0 0 21 18" sw={1.500} color="#fff">
              <path d="M1 6H4.500L9 2V16L4.500 12H1ZM12 6Q13.500 9 12 12M14.800 3.800Q17.800 9 14.800 14.200M17.200 1.500Q21.800 9 17.200 16.500" />
            </Stroke>
          </TrayIcon>
          <TrayIcon $w={20}>
            <Stroke w={20} h={18} box="0 0 20 18" sw={1.700} color="#fff">
              <path d="M8 4H15Q17 4 17 6V13Q17 15 15 15H4Q2 15 2 13V11" /><path d="M18.500 7.500v4" strokeWidth="2.400" /><path d="M6 0L1 6.500H4.500L3 11 8 5H5.500Z" fill="#fff" strokeWidth="0.500" />
              <path d="M6 7.500h9v5.500H4.500z" fill="#fff" stroke="none" />
            </Stroke>
          </TrayIcon>
          <Clock>19:23<br />22.06.2025</Clock>
          <svg width="18" height="20" viewBox="0 0 18 20">
            <path d="M2 15V9Q2 3 8 3T14.500 9V15L16 17H0.500ZM5.500 18H11Q10.500 20 8.200 20T5.500 18Z" fill="#fff" />
            <path d="M6 8h4.500L6 13h4.500" stroke="#241b2e" strokeWidth="1.400" fill="none" />
            <path d="M12.500 1H17l-4.500 4.500H17" stroke="#fff" strokeWidth="1.300" fill="none" />
          </svg>
        </Tray>
      </Taskbar>
    </Screen>
  );
}
